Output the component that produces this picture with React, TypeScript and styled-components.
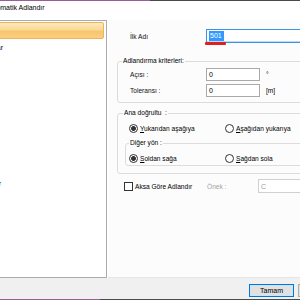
import * as React from 'react';
import styled, { createGlobalStyle } from 'styled-components';

const GlobalStyle = createGlobalStyle`
  html, body {
    margin: 0;
    padding: 0;
    overflow: hidden;
    background: #f0f0f0;
  }
  body {
    font-family: "Liberation Sans", Arial, sans-serif;
    font-size: 6.6px;
    color: #000;
  }
  * {
    box-sizing: border-box;
  }
`;

const Window = styled.div`
  width: 500px;
  height: 300px;
  margin-left: -150px;
  display: flex;
  flex-direction: column;
  background: #fff;
`;

const Edge = styled.div<{ $split: number }>`
  height: 1px;
  flex: none;
  background: linear-gradient(
    to right,
    #9c5c9c 0,
    #9c5c9c ${(p) => p.$split}px,
    #4a4a4a ${(p) => p.$split}px
  );
`;

const TitleBar = styled.div`
  height: 19px;
  flex: none;
  padding: 3px 0 0 139px;
  font-size: 7px;
  line-height: 8px;
  background: #fff;
`;

const Body = styled.div`
  flex: 1;
  min-height: 0;
  display: flex;
  background: #fff;
`;

const TreePanel = styled.div`
  width: 257px;
  flex: none;
  padding: 1px;
  font-size: 7px;
  background: #fff;
  border-top: 1px solid #ababab;
  border-right: 1px solid #ababab;
  border-bottom: 1px solid #ababab;
`;

const TreeItem = styled.div<{ $end: number; $selected?: boolean }>`
  height: 17px;
  display: flex;
  align-items: center;
  justify-content: flex-end;
  white-space: nowrap;
  padding-right: ${(p) => 105 - p.$end}px;
  margin-right: 1px;
  background: ${(p) =>
    p.$selected
      ? 'linear-gradient(to bottom, #fde9c0 0%, #fbd995 45%, #f8c46c 55%, #f9cf82 100%)'
      : 'transparent'};
  border: 1px solid ${(p) => (p.$selected ? '#edb45b' : 'transparent')};
  border-radius: 2px;
`;

const Content = styled.div`
  flex: 1;
  margin-left: 1px;
  padding: 9px 0 0 9px;
  display: flex;
  flex-direction: column;
  background: #fcfcfc;
  border-bottom: 1px solid #e6e6e6;
`;

const NameRow = styled.div`
  height: 14px;
  display: flex;
  align-items: center;
  padding-left: 13px;
`;

const Label = styled.span<{ $w?: number; $muted?: boolean }>`
  flex: none;
  width: ${(p) => (p.$w ? `${p.$w}px` : 'auto')};
  color: ${(p) => (p.$muted ? '#a3a3a3' : '#111')};
  white-space: nowrap;
`;

const Field = styled.div<{ $w?: number; $h: number; $active?: boolean; $disabled?: boolean }>`
  position: relative;
  height: ${(p) => p.$h}px;
  ${(p) => (p.$w ? `width: ${p.$w}px; flex: none;` : 'flex: 1;')}
  display: flex;
  align-items: center;
  padding-left: 2px;
  font-size: 7px;
  background: #fff;
  color: ${(p) => (p.$disabled ? '#9a9a9a' : '#000')};
  border: 1px solid
    ${(p) => (p.$active ? '#3d94e0' : p.$disabled ? '#d0d0d0' : '#a9a9a9')};
  box-shadow: ${(p) => (p.$active ? 'inset 0 -1px 0 #b9dbf7' : 'none')};
`;

const Selected = styled.span`
  background: #3399ff;
  color: #fff;
  padding: 0 2px 0 1px;
  line-height: 10px;
`;

const RedMark = styled.div`
  position: absolute;
  left: -2px;
  top: 12px;
  width: 21px;
  height: 3px;
  border-radius: 1px;
  background: #e0201e;
`;

const GroupBox = styled.div<{ $top: number; $side?: number; $pb: number }>`
  margin: ${(p) => p.$top}px ${(p) => p.$side ?? 10}px 0 ${(p) => p.$side ?? 0}px;
  padding-bottom: ${(p) => p.$pb}px;
  display: flex;
  flex-direction: column;
  border: 1px solid #dcdcdc;
  border-radius: 3px;
`;

const Legend = styled.div<{ $indent: number }>`
  align-self: flex-start;
  height: 8px;
  line-height: 8px;
  margin: -5px 0 0 ${(p) => p.$indent}px;
  padding: 0 1px;
  background: #fcfcfc;
  white-space: nowrap;
`;

const FieldRow = styled.div<{ $top: number }>`
  height: 13px;
  margin-top: ${(p) => p.$top}px;
  padding-left: 12px;
  display: flex;
  align-items: center;
`;

const Unit = styled.span`
  margin-left: 6px;
  white-space: nowrap;
`;

const RadioRow = styled.div<{ $pad: number }>`
  height: 12px;
  margin-top: 5px;
  padding-left: ${(p) => p.$pad}px;
  display: flex;
  align-items: center;
`;

const Option = styled.label`
  width: 96px;
  flex: none;
  display: flex;
  align-items: center;
  gap: 2px;
  white-space: nowrap;
`;

const Radio = styled.span<{ $checked?: boolean }>`
  width: 9px;
  height: 9px;
  flex: none;
  border-radius: 50%;
  border: 1px solid #333;
  background: ${(p) =>
    p.$checked ? 'radial-gradient(circle, #333 0 2.1px, #fff 2.7px)' : '#fff'};
`;

const CheckRow = styled.div`
  height: 14px;
  margin-top: 5px;
  padding-left: 7px;
  margin-right: 10px;
  display: flex;
  align-items: center;
`;

const CheckOption = styled.label`
  width: 83px;
  flex: none;
  display: flex;
  align-items: center;
  gap: 2px;
  white-space: nowrap;
`;

const Check = styled.span`
  width: 9px;
  height: 9px;
  flex: none;
  border: 1px solid #333;
  background: #fff;
`;

const Footer = styled.div`
  height: 21px;
  flex: none;
  display: flex;
  justify-content: flex-end;
  gap: 4px;
  padding: 6px 7px 0 0;
  background: #f0f0f0;
`;

const Button = styled.button<{ $default?: boolean }>`
  width: 45px;
  height: 13px;
  padding: 0;
  font-family: inherit;
  font-size: 7px;
  color: #000;
  background: #e1e1e1;
  border: 1px solid ${(p) => (p.$default ? '#0078d7' : '#adadad')};
  box-shadow: ${(p) => (p.$default ? 'inset 0 0 0 1px #cde4f7' : 'none')};
`;

const treeItems = [
  { label: 'Otomatik Adlandırma', end: -12, selected: true },
  { label: 'Kolon ve Perdelar', end: 5 },
  { label: 'Kirişler', end: -20 },
  { label: 'Döşemeler', end: -14 },
  { label: 'Temeller', end: -30 },
  { label: 'Duvarlar', end: -26 },
  { label: 'Merdivenler', end: -18 },
  { label: 'Akslar', end: -34 },
  { label: 'Perde Kalıbı', end: 1 },
  { label: 'Radye Kirişlar', end: 3 },
];

export default function App() {
  return (
    <>
      <GlobalStyle />
      <Window>
        <Edge $split={300} />
        <TitleBar>Otomatik Adlandır</TitleBar>
        <Body>
          <TreePanel>
            {treeItems.map((item) => (
              <TreeItem key={item.label} $end={item.end} $selected={item.selected}>
                {item.label}
              </TreeItem>
            ))}
          </TreePanel>
          <Content>
            <NameRow>
              <Label $w={76}>İlk Adı</Label>
              <Field $h={14} $active>
                <Selected>501</Selected>
                <RedMark />
              </Field>
            </NameRow>

            <GroupBox $top={18} $pb={5}>
              <Legend $indent={4}>Adlandırma kriterleri:</Legend>
              <FieldRow $top={3}>
                <Label $w={76}>Açısı :</Label>
                <Field $w={54} $h={13}>0</Field>
                <Unit>°</Unit>
              </FieldRow>
              <FieldRow $top={3}>
                <Label $w={76}>Toleransı :</Label>
                <Field $w={54} $h={13}>0</Field>
                <Unit>[m]</Unit>
              </FieldRow>
            </GroupBox>

            <GroupBox $top={10} $pb={7}>
              <Legend $indent={5}>Ana doğrultu&nbsp;&nbsp;:</Legend>
              <RadioRow $pad={11}>
                <Option>
                  <Radio $checked />
                  <span>
                    <u>Y</u>ukarıdan aşağıya
                  </span>
                </Option>
                <Option>
                  <Radio />
                  <span>
                    <u>A</u>şağıdan yukarıya
                  </span>
                </Option>
              </RadioRow>
              <GroupBox $top={9} $side={7} $pb={1}>
                <Legend $indent={3}>Diğer yön :</Legend>
                <RadioRow $pad={3}>
                  <Option>
                    <Radio $checked />
                    <span>
                      <u>S</u>oldan sağa
                    </span>
                  </Option>
                  <Option>
                    <Radio />
                    <span>
                      <u>S</u>ağdan sola
                    </span>
                  </Option>
                </RadioRow>
              </GroupBox>
            </GroupBox>

            <CheckRow>
              <CheckOption>
                <Check />
                <span>Aksa Göre Adlandır</span>
              </CheckOption>
              <Label $w={51} $muted>
                Önek :
              </Label>
              <Field $h={14} $disabled>
                C
              </Field>
            </CheckRow>
          </Content>
        </Body>
        <Footer>
          <Button $default>Tamam</Button>
          <Button>İptal</Button>
        </Footer>
        <Edge $split={250} />
      </Window>
    </>
  );
}
